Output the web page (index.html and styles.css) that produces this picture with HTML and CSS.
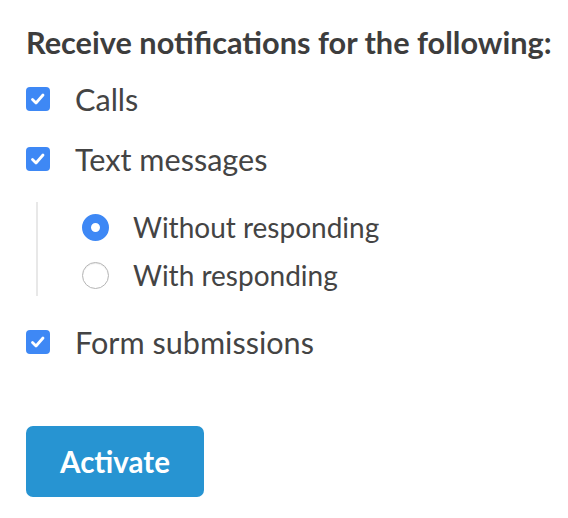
FILE: index.html
```html
<!DOCTYPE html>
<html lang="en">
<head>
  <meta charset="UTF-8">
  <meta name="viewport" content="width=device-width, initial-scale=1.0">
  <title>Notifications</title>
  <link rel="stylesheet" href="styles.css">
</head>
<body>
  <div class="container">
    <h1 class="title">Receive notifications for the following:</h1>

    <label class="row">
      <span class="check"><svg viewBox="0 0 24 24"><path d="M6.5 12.5l3.5 3.5 7-8"/></svg></span>
      Calls
    </label>

    <label class="row">
      <span class="check"><svg viewBox="0 0 24 24"><path d="M6.5 12.5l3.5 3.5 7-8"/></svg></span>
      Text messages
    </label>

    <div class="sub">
      <label class="row radio-row">
        <span class="radio on"></span>
        Without responding
      </label>
      <label class="row radio-row">
        <span class="radio"></span>
        With responding
      </label>
    </div>

    <label class="row last">
      <span class="check"><svg viewBox="0 0 24 24"><path d="M6.5 12.5l3.5 3.5 7-8"/></svg></span>
      Form submissions
    </label>

    <button class="button">Activate</button>
  </div>
</body>
</html>
```

FILE: styles.css
```css
body {
  font-family: Lato, "Open Sans", sans-serif;
  color: #444;
  background: #fff;
  margin: 0;
  padding: 0;
}
.container {
  padding: 23px 0 0 26px;
}
.title {
  margin: 0 0 12px;
  font-size: 30.7px;
  font-weight: bold;
  line-height: 40px;
  color: #3d3d3d;
  white-space: nowrap;
}
.row {
  display: flex;
  align-items: center;
  height: 48px;
  margin-bottom: 12px;
  font-size: 30.6px;
}
.check {
  width: 24px;
  height: 24px;
  border-radius: 4px;
  background: #3e88f5;
  margin-right: 25px;
  display: flex;
}
.check svg {
  width: 24px;
  height: 24px;
  fill: none;
  stroke: #fff;
  stroke-width: 2.8;
  stroke-linecap: round;
  stroke-linejoin: round;
}
.sub {
  margin: 19px 0 22px 10px;
  padding: 3px 0 0 44px;
  border-left: 2px solid #e8e8e8;
  height: 91px;
}
.radio-row {
  height: 44px;
  margin-bottom: 4px;
  font-size: 28px;
}
.radio {
  box-sizing: border-box;
  width: 27px;
  height: 27px;
  border-radius: 50%;
  border: 1px solid #b5b5b5;
  background: #fff;
  margin-right: 24px;
  box-shadow: inset 0 1px 1px rgba(0, 0, 0, 0.08);
}
.radio.on {
  border: 9px solid #3e88f5;
  box-shadow: none;
}
.last {
  margin-bottom: 60px;
}
.button {
  width: 178px;
  height: 71px;
  border: none;
  border-radius: 7px;
  background: #2794d2;
  color: #fff;
  font-family: inherit;
  font-size: 29.5px;
  font-weight: bold;
  cursor: pointer;
}
```
